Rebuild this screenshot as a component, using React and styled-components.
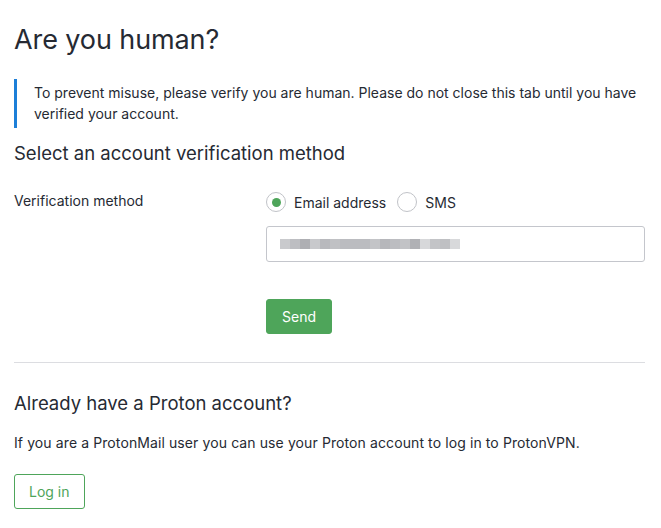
import React from 'react';
import styled, { createGlobalStyle } from 'styled-components';

const GlobalStyle = createGlobalStyle`
    body {
        margin: 0;
        background: #fff;
        font-family: 'Inter', 'Noto Sans', sans-serif;
        color: #262a33;
    }
`;

const Page = styled.div`
    display: flex;
    flex-flow: column nowrap;
    padding: 0 16px 0 14px;
`;

const Title = styled.h1`
    margin: 22px 0 0;
    font-size: 27px;
    line-height: 36px;
    font-weight: 400;
    letter-spacing: -0.1px;
`;

const Notice = styled.div`
    margin-top: 21px;
    border-left: 3px solid #1d7fd8;
    padding: 3px 0 4px 17px;
    font-size: 14px;
    line-height: 21px;
`;

const Subtitle = styled.h2`
    margin: ${props => props.top}px 0 0;
    font-size: 18.5px;
    line-height: 28px;
    font-weight: 400;
`;

const FieldRow = styled.div`
    display: grid;
    grid-template-columns: 252px 1fr;
    margin-top: 23px;
`;

const Label = styled.div`
    padding-top: 1px;
    font-size: 14px;
    line-height: 20px;
`;

const Field = styled.div`
    display: flex;
    flex-flow: column nowrap;
    align-items: flex-start;
`;

const RadioGroup = styled.div`
    display: flex;
    align-items: center;
    height: 24px;
    gap: 11px;
`;

const RadioOption = styled.label`
    display: flex;
    align-items: center;
    gap: 8px;
    font-size: 14px;
`;

const RadioCircle = styled.span`
    width: 20px;
    height: 20px;
    box-sizing: border-box;
    border: 1px solid #c1c3c8;
    border-radius: 50%;
    display: flex;
    align-items: center;
    justify-content: center;

    &::after {
        content: '';
        width: 9px;
        height: 9px;
        border-radius: 50%;
        background: ${props => (props.checked ? '#4ea55a' : 'transparent')};
    }
`;

const Input = styled.div`
    margin-top: 12px;
    width: 100%;
    height: 36px;
    box-sizing: border-box;
    border: 1px solid #c4c6cc;
    border-radius: 3px;
    display: flex;
    align-items: center;
    padding-left: 13px;
`;

const Blur = styled.div`
    display: flex;
`;

const Pixel = styled.span`
    width: 10px;
    height: 10px;
    background: ${props => props.shade};
`;

const Button = styled.button`
    margin-top: ${props => props.top}px;
    height: 35px;
    padding: 0 ${props => props.pad}px;
    border-radius: 3px;
    font-family: 'Inter', sans-serif;
    font-size: 14px;
    background: ${props => (props.primary ? '#4ea55a' : '#fff')};
    color: ${props => (props.primary ? '#fff' : '#4ea55a')};
    border: 1px solid #4ea55a;
`;

const Divider = styled.hr`
    margin: 28px 0 0;
    border: 0;
    border-top: 1px solid #dcdde1;
`;

const Text = styled.p`
    margin: 16px 0 0;
    font-size: 14px;
    line-height: 20px;
    letter-spacing: 0.1px;
`;

const Actions = styled.div`
    display: flex;
`;

const shades = [
    '#c9cacd', '#bdbec2', '#aeafb3', '#c8c9cc', '#b8b9bd', '#c0c1c4',
    '#bbbcc0', '#bbbcc0', '#bbbcc0', '#c3c4c7', '#b6b7bb', '#bcbdc1',
    '#c2c3c6', '#b0b1b5', '#d7d8da', '#c3c4c7', '#bfc0c3', '#d8d9db',
];

export default function App() {
    return (
        <Page>
            <GlobalStyle />
            <Title>Are you human?</Title>
            <Notice>
                To prevent misuse, please verify you are human. Please do not close this tab until you have verified your account.
            </Notice>
            <Subtitle top={11}>Select an account verification method</Subtitle>
            <FieldRow>
                <Label>Verification method</Label>
                <Field>
                    <RadioGroup>
                        <RadioOption>
                            <RadioCircle checked />
                            Email address
                        </RadioOption>
                        <RadioOption>
                            <RadioCircle />
                            SMS
                        </RadioOption>
                    </RadioGroup>
                    <Input>
                        <Blur>
                            {shades.map((s, i) => <Pixel key={i} shade={s} />)}
                        </Blur>
                    </Input>
                    <Button primary top={37} pad={15}>Send</Button>
                </Field>
            </FieldRow>
            <Divider />
            <Subtitle top={26}>Already have a Proton account?</Subtitle>
            <Text>If you are a ProtonMail user you can use your Proton account to log in to ProtonVPN.</Text>
            <Actions>
                <Button top={21} pad={14}>Log in</Button>
            </Actions>
        </Page>
    );
}
